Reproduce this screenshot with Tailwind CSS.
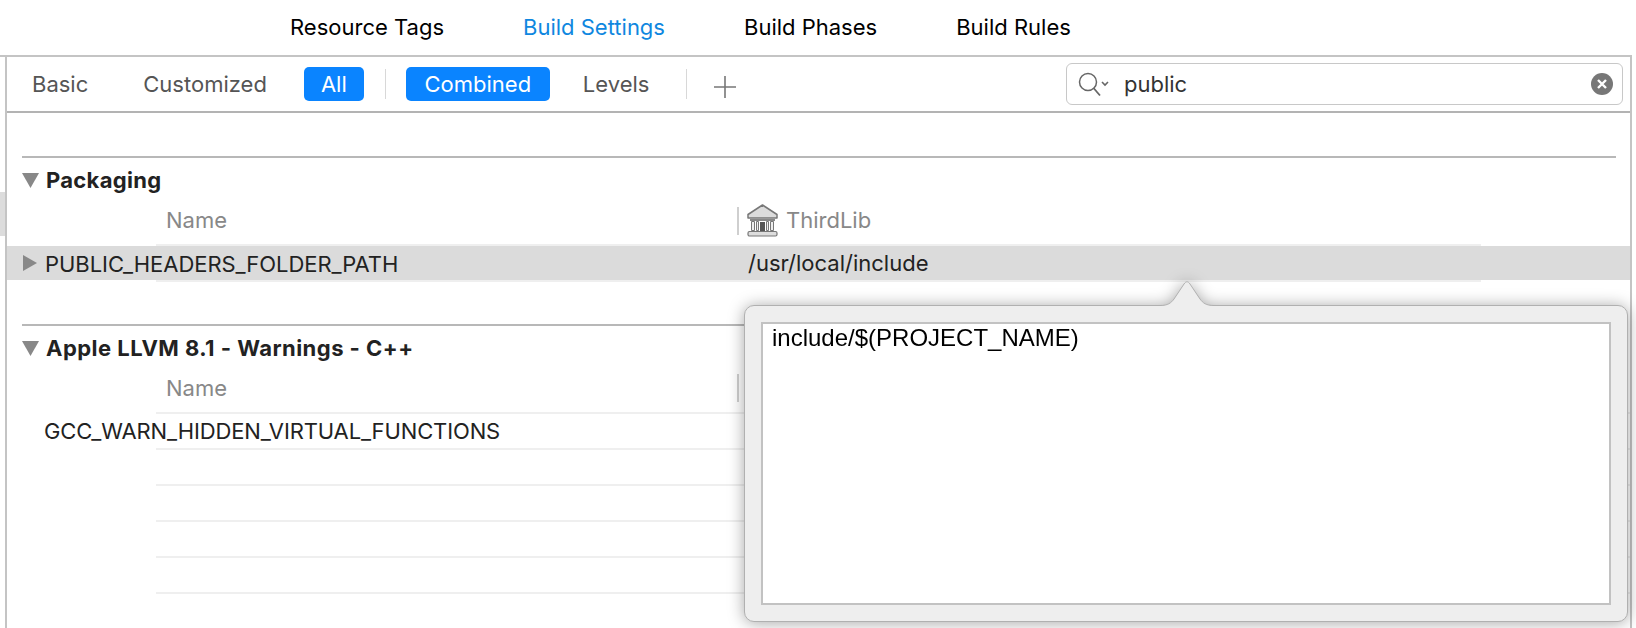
<!DOCTYPE html>
<html lang="en">
<head>
<meta charset="utf-8"/>
<title>Build Settings</title>
<script src="https://cdn.jsdelivr.net/npm/@tailwindcss/browser@4"></script>
</head>
<body class="bg-white">
<div class="relative w-[1636px] h-[628px] overflow-hidden bg-white font-['Inter',sans-serif] text-[#222]">

  <!-- top tabs -->
  <div class="flex h-[57px] w-[1632px] items-center border-b-2 border-[#c4c4c4] pl-[290px] gap-[79px] text-[22px] text-black">
    <span>Resource Tags</span>
    <span class="text-[#0f87e0]">Build Settings</span>
    <span>Build Phases</span>
    <span>Build Rules</span>
  </div>

  <div class="flex h-[571px]">
    <!-- sidebar stub -->
    <div class="w-[5px] shrink-0 pt-[135px]">
      <div class="h-[44px] bg-[#dcdcdc]"></div>
    </div>

    <div class="w-[1627px] border-x-2 border-[#c4c4c4]">
      <!-- filter bar -->
      <div class="flex h-[56px] items-center border-b-2 border-[#b3b3b3] pl-[25px] pr-[7px] text-[22px] text-[#555]">
        <span>Basic</span>
        <span class="ml-[55px]">Customized</span>
        <span class="ml-[37px] flex h-[34px] w-[60px] items-center justify-center rounded-[5px] bg-[#0a84ff] text-white">All</span>
        <span class="ml-[21px] h-[30px] w-[1px] bg-[#d8d8d8]"></span>
        <span class="ml-[20px] flex h-[34px] w-[144px] items-center justify-center rounded-[5px] bg-[#0a84ff] text-white">Combined</span>
        <span class="ml-[33px]">Levels</span>
        <span class="ml-[37px] h-[30px] w-[1px] bg-[#d8d8d8]"></span>
        <svg class="ml-[26px] mt-[6px]" width="24" height="24" viewBox="0 0 24 24"><path d="M12 1v22M1 12h22" stroke="#777" stroke-width="1.6" fill="none"/></svg>
        <div class="ml-auto flex h-[42px] w-[557px] items-center rounded-[6px] border border-[#c8c8c8] pl-[11px] pr-[9px] text-[#333]">
          <svg width="36" height="26" viewBox="0 0 36 26"><circle cx="10" cy="11" r="8.500" stroke="#666" stroke-width="1.5" fill="none"/><path d="M15.500 17l6.500 7.500" stroke="#666" stroke-width="1.8" fill="none"/><path d="M24 11l3 3 3-3" stroke="#666" stroke-width="1.6" fill="none"/></svg>
          <span class="ml-[10px]">public</span>
          <svg class="ml-auto" width="22" height="22" viewBox="0 0 22 22"><circle cx="11" cy="11" r="11" fill="#777"/><path d="M7 7l8 8M15 7l-8 8" stroke="#fff" stroke-width="2.400"/></svg>
        </div>
      </div>

      <div class="pt-[43px]">
        <!-- Packaging -->
        <div class="ml-[15px] mr-[14px] border-t-2 border-[#b8b8b8]">
          <div class="flex h-[44px] items-center pt-[1px]">
            <svg width="17" height="15" viewBox="0 0 17 15"><path d="M0 0h17l-8.500 15z" fill="#888"/></svg>
            <span class="ml-[7px] text-[22px] font-bold tracking-[0.3px] text-[#222]">Packaging</span>
          </div>
        </div>
        <div class="flex h-[40px] items-center pb-[3px]">
          <span class="ml-[159px] w-[571px] text-[22px] text-[#888]">Name</span>
          <span class="h-[28px] w-[2px] bg-[#cfcfcf]"></span>
          <svg class="ml-[7px]" width="33" height="33" viewBox="0 0 33 33">
            <path d="M16.500 1L31 10.500V14H2v-3.500z" fill="#dcdcdc" stroke="#777" stroke-width="1.500" stroke-linejoin="round"/>
            <path d="M4 15h25v2H4z" fill="#888"/>
            <path d="M5.500 17.500h3v9h-3zM10.500 17.500h2v9h-2zM20.500 17.500h2v9h-2zM24.500 17.500h3v9h-3z" fill="#eee" stroke="#777"/>
            <path d="M14 18h5v9h-5z" fill="#555"/>
            <rect x="2" y="27.500" width="29" height="4.500" rx="1.500" fill="#ddd" stroke="#777" stroke-width="1.200"/>
          </svg>
          <span class="ml-[7px] text-[22px] text-[#888]">ThirdLib</span>
        </div>
        <!-- selected row -->
        <div class="relative mt-[4px] flex h-[34px] items-center bg-[#dbdbdb] text-[22px]">
          <div class="absolute left-[149px] top-[-2px] h-[38px] w-[1325px] border-y-2 border-[#efefef]"></div>
          <svg class="relative ml-[16px]" width="14" height="16" viewBox="0 0 14 16"><path d="M0 0l14 8-14 8z" fill="#888"/></svg>
          <span class="relative ml-[8px] mt-[2px] w-[703px] tracking-[-0.05px]">PUBLIC_HEADERS_FOLDER_PATH</span>
          <span class="relative">/usr/local/include</span>
        </div>

        <!-- Apple LLVM -->
        <div class="ml-[15px] mt-[44px] mr-[14px] border-t-2 border-[#b8b8b8]">
          <div class="flex h-[45px] items-center">
            <svg width="17" height="15" viewBox="0 0 17 15"><path d="M0 0h17l-8.500 15z" fill="#888"/></svg>
            <span class="ml-[7px] text-[22px] font-bold tracking-[0.47px] text-[#222]">Apple LLVM 8.1 - Warnings - C++</span>
          </div>
        </div>
        <div class="flex h-[41px] items-center pb-[7px]">
          <span class="ml-[159px] w-[571px] text-[22px] text-[#888]">Name</span>
          <span class="h-[28px] w-[2px] bg-[#cfcfcf]"></span>
        </div>
        <div class="ml-[149px] border-t-2 border-[#efefef]"></div>
        <div class="flex h-[34px] items-center text-[22px]"><span class="ml-[37px] tracking-[-0.13px]">GCC_WARN_HIDDEN_VIRTUAL_FUNCTIONS</span></div>
        <div class="ml-[149px] h-[36px] border-t-2 border-[#efefef]"></div>
        <div class="ml-[149px] h-[36px] border-t-2 border-[#efefef]"></div>
        <div class="ml-[149px] h-[36px] border-t-2 border-[#efefef]"></div>
        <div class="ml-[149px] h-[36px] border-t-2 border-[#efefef]"></div>
        <div class="ml-[149px] h-[36px] border-t-2 border-[#efefef]"></div>
      </div>
    </div>
  </div>

  <!-- popover -->
  <div class="absolute left-[744px] top-[281px] h-[341px] w-[884px] drop-shadow-[0_1px_8px_rgba(0,0,0,0.35)]">
    <div class="absolute inset-x-0 bottom-0 top-[24px] rounded-[10px] border border-[#b0b0b0] bg-[#eeeeee] px-[16px] pb-[16px] pt-[16px]">
      <div class="h-full border-2 border-[#c2c2c2] bg-white pl-[9px] font-['Liberation_Sans',sans-serif] text-[24px] leading-[28px] text-black">include/$(PROJECT_NAME)</div>
    </div>
    <svg class="absolute left-[416px] top-0" width="54" height="26" viewBox="0 0 54 26"><path d="M0 24.500C8 24.500 11 22 14 18L24 3C26 0 28 0 30 3L40 18C43 22 46 24.500 54 24.500V26H0z" fill="#eeeeee"/><path d="M0 24.500C8 24.500 11 22 14 18L24 3C26 0 28 0 30 3L40 18C43 22 46 24.500 54 24.500" fill="none" stroke="#b0b0b0"/></svg>
  </div>
</div>
</body>
</html>
